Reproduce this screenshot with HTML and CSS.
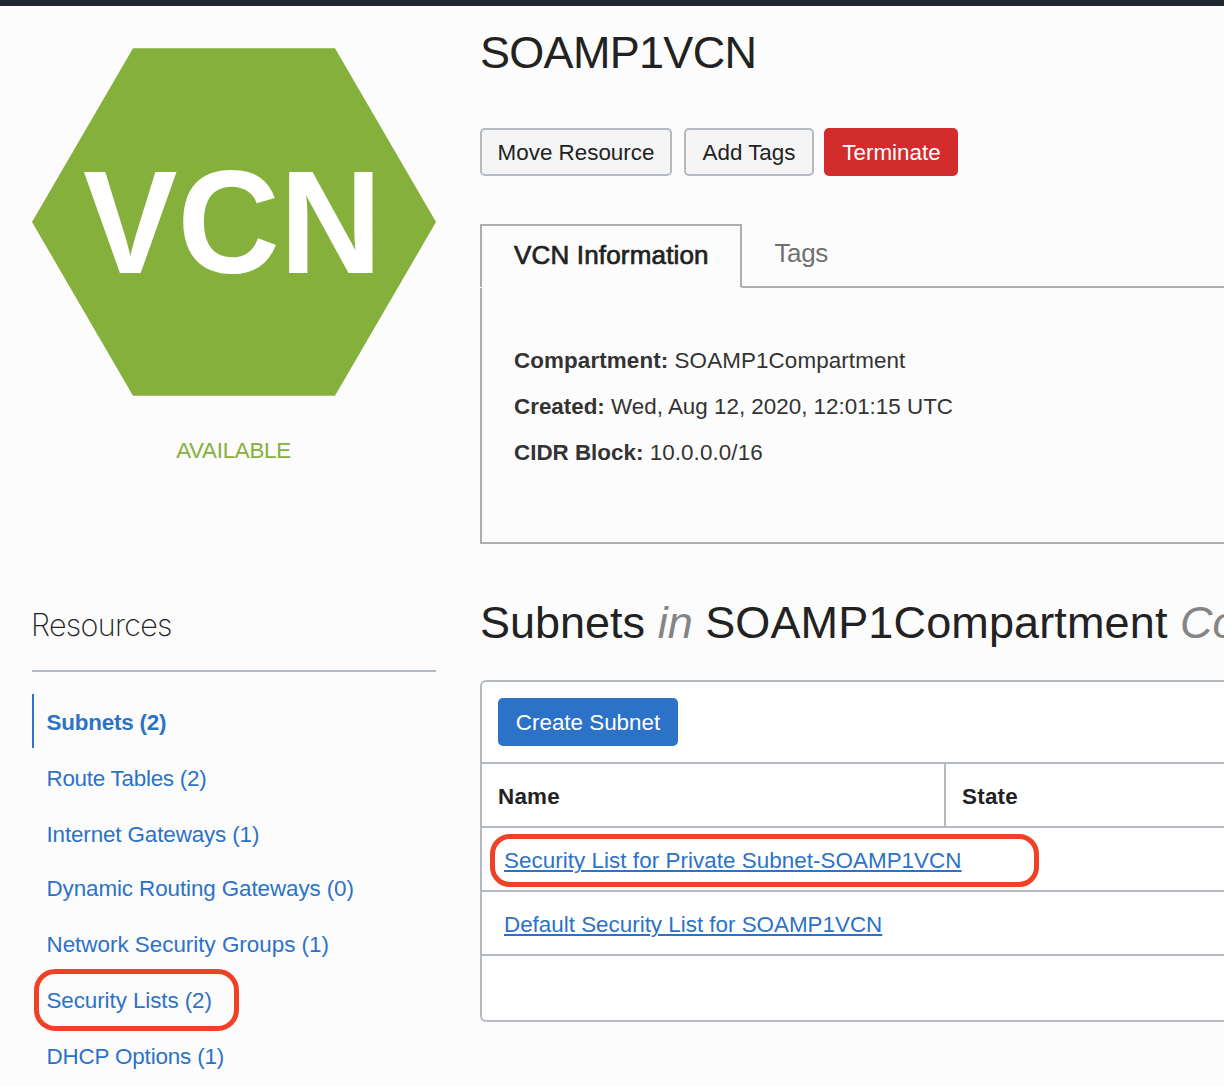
FILE: index.html
```html
<!DOCTYPE html>
<html lang="en">
<head>
<meta charset="utf-8">
<title>SOAMP1VCN</title>
<link rel="stylesheet" href="styles.css">
</head>
<body>
<header class="topbar"></header>
<div class="layout">
  <aside class="sidebar">
    <svg class="hexagon" width="404" height="348" viewBox="0 0 404 348" role="img" aria-label="VCN">
      <polygon points="101,0.3 303,0.3 404,174 303,347.7 101,347.7 0,174" fill="#85b03c"/>
      <text class="hexagon-label" x="51" y="225" textLength="299" lengthAdjust="spacingAndGlyphs">VCN</text>
    </svg>
    <p class="status">AVAILABLE</p>
    <h2 class="resources-title">Resources</h2>
    <nav class="resources">
      <a class="resource active"><span class="t-subnets">Subnets (2)</span></a>
      <a class="resource low"><span class="t-routes">Route Tables (2)</span></a>
      <a class="resource low"><span class="t-internet">Internet Gateways (1)</span></a>
      <a class="resource short"><span class="t-dynamic">Dynamic Routing Gateways (0)</span></a>
      <a class="resource"><span class="t-groups">Network Security Groups (1)</span></a>
      <a class="resource marked-nav"><span class="t-lists">Security Lists (2)</span></a>
      <a class="resource"><span class="t-dhcp">DHCP Options (1)</span></a>
    </nav>
  </aside>
  <main class="main">
    <h1 class="title"><span class="t-title">SOAMP1VCN</span></h1>
    <div class="actions">
      <button class="btn btn-move"><span>Move Resource</span></button>
      <button class="btn btn-tags"><span>Add Tags</span></button>
      <button class="btn btn-danger"><span>Terminate</span></button>
    </div>
    <div class="tabs">
      <div class="tab-active"><span class="t-info">VCN Information</span></div>
      <div class="tab-idle"><span class="t-tags">Tags</span></div>
    </div>
    <section class="info">
      <p><b class="t-compartment">Compartment:</b> <span class="t-compartment">SOAMP1Compartment</span></p>
      <p><b>Created:</b> <span>Wed, Aug 12, 2020, 12:01:15 UTC</span></p>
      <p><b>CIDR Block:</b> <span class="t-cidr">10.0.0.0/16</span></p>
    </section>
    <h1 class="title subnets-title">Subnets <i>in</i> <span class="t-scope">SOAMP1Compartment</span> <i>Compartment</i></h1>
    <section class="table">
      <div class="toolbar"><button class="btn btn-primary"><span>Create Subnet</span></button></div>
      <div class="row head"><div class="cell name"><span class="t-head">Name</span></div><div class="cell"><span class="t-head">State</span></div></div>
      <div class="row marked-row"><a class="link t-private">Security List for Private Subnet-SOAMP1VCN</a></div>
      <div class="row"><a class="link">Default Security List for SOAMP1VCN</a></div>
      <div class="row last"></div>
    </section>
  </main>
</div>
</body>
</html>
```
FILE: styles.css
```css
*, *::before, *::after { box-sizing: border-box; }
html, body { height: 1086px; overflow: hidden; }
body {
  margin: 0;
  background: #fcfcfc;
  color: #222;
  font-family: "Liberation Sans", Arial, sans-serif;
  font-size: 22.4px;
}
h1, h2, p { margin: 0; font-weight: 400; }
.topbar { height: 6px; background: #202632; }
.layout {
  display: grid;
  grid-template-columns: 404px 744px;
  column-gap: 44px;
  padding-left: 32px;
}

/* Sidebar */
.sidebar { padding-top: 42px; }
.hexagon { display: block; }
.hexagon-label { font-size: 147px; font-weight: 700; fill: #fff; }
.status {
  margin-top: 41px;
  height: 28px;
  line-height: 28px;
  padding-right: 1px;
  text-align: center;
  letter-spacing: -0.3px;
  color: #85b03c;
}
.resources-title {
  height: 66px;
  margin-top: 141px;
  padding-bottom: 26px;
  border-bottom: 2px solid #b4babf;
  font-family: Inter, "Liberation Sans", sans-serif;
  font-size: 30.5px;
  font-weight: 200;
  line-height: 38px;
  letter-spacing: -0.7px;
  text-indent: -1px;
}
.resources { padding-top: 22px; }
.resource {
  display: flex;
  position: relative;
  height: 56px;
  padding: 14px 0 0 12.5px;
  border-left: 2px solid transparent;
  line-height: 28px;
  white-space: nowrap;
  color: #2c72c7;
}
.resource.active { height: 54px; margin-bottom: 2px; padding-top: 15px; border-color: #2c72c7; font-weight: 700; }
.resource.low { padding-top: 15px; }
.resource.short { margin-top: -1px; }
.t-subnets { letter-spacing: -0.2px; }
.t-routes { letter-spacing: -0.25px; }
.t-internet { letter-spacing: -0.12px; }
.t-dynamic { letter-spacing: -0.09px; }
.t-lists { letter-spacing: -0.08px; }
.t-dhcp { letter-spacing: -0.15px; }
.marked-nav::after {
  content: "";
  position: absolute;
  left: -0.5px;
  top: -4px;
  width: 205px;
  height: 62px;
  border: 5px solid #ee4125;
  border-radius: 21px;
}

/* Main column */
.main { padding-top: 19px; }
.title { height: 56px; font-size: 45px; line-height: 56px; white-space: nowrap; }
.title i { color: #858585; }
.t-title { letter-spacing: -0.7px; }
.t-scope { letter-spacing: 0.13px; }
.actions { display: flex; margin-top: 47px; }
.btn {
  height: 48px;
  padding: 2px 0 0;
  border: 2px solid #b4babf;
  border-radius: 5px;
  background: #f5f5f5;
  color: #222;
  font: inherit;
  line-height: 28px;
  white-space: nowrap;
}
.btn-move { width: 192px; margin-right: 12px; border-color: #b4b9c2; }
.btn-tags { width: 130px; margin-right: 10px; border-color: #b4b9c2; }
.btn-danger { width: 134px; padding-left: 1px; border-color: #d22c2c; background: #d22c2c; color: #fff; }
.btn-primary { width: 180px; border-color: #2c72c7; background: #2c72c7; color: #fff; }
.tabs { display: flex; height: 64px; margin-top: 48px; font-size: 26px; line-height: 32px; }
.tab-active {
  width: 262px;
  height: 63px;
  padding: 13px 0 0 32px;
  border: 2px solid #adadad;
  border-bottom: 0;
  -webkit-text-stroke: 0.7px #222;
}
.t-info { letter-spacing: 0.17px; }
.t-tags { letter-spacing: -0.4px; }
.tab-idle {
  flex: 1;
  margin-left: -2px;
  padding: 13px 0 0 34.5px;
  border-bottom: 2px solid #adadad;
  border-radius: 0 0 0 3px;
  color: #707070;
}
.info {
  height: 256px;
  padding: 50px 0 0 32px;
  border: solid #adadad;
  border-width: 0 0 2px 2px;
  color: #333;
}
.info p { height: 46px; line-height: 46px; white-space: nowrap; }
.t-compartment { letter-spacing: 0.11px; }
.t-cidr { letter-spacing: 0.1px; }
.subnets-title { margin-top: 51px; }
.table {
  height: 342px;
  margin-top: 29px;
  border: 2px solid #b4b9c2;
  border-right: 0;
  border-radius: 6px 0 0 6px;
  background: #fff;
}
.toolbar { height: 82px; padding: 16px; border-bottom: 2px solid #b4b9c2; }
.row { display: flex; align-items: center; position: relative; height: 64px; padding: 4px 0 0 22px; border-bottom: 2px solid #b4babf; }
.head { padding: 0; font-weight: 700; }
.cell { display: flex; align-items: center; height: 62px; padding: 4px 0 0 16px; }
.cell.name { width: 464px; border-right: 2px solid #b4b9c2; }
.t-head { letter-spacing: 0.25px; }
.last { border: 0; }
.link { color: #2c72c7; text-decoration: underline; text-decoration-thickness: 2px; text-underline-offset: 2px; }
.t-private { letter-spacing: 0.05px; }
.marked-row::after {
  content: "";
  position: absolute;
  left: 8px;
  top: 6px;
  width: 549px;
  height: 53px;
  border: 5px solid #ee4125;
  border-radius: 20px;
}
```
